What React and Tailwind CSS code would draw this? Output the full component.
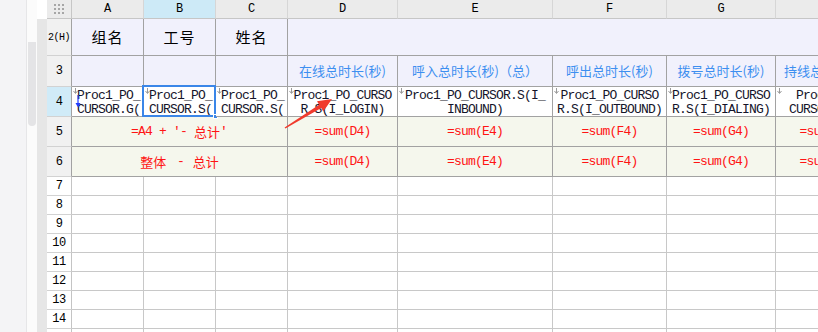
import React from "react";

const MONO = { fontFamily: '"Liberation Mono", "Noto Sans CJK SC", monospace' };
const CJK = { fontFamily: '"Noto Sans CJK SC", "Liberation Sans", sans-serif' };

const DARK = "border-[#a2a2a2]";
const LIGHT = "border-[#c8c8c8]";

function Marker() {
  return (
    <svg className="absolute left-[1px] top-[1px]" width="5" height="6" viewBox="0 0 5 6">
      <path d="M2.5 0 V5" stroke="#9a9a9a" strokeWidth="1" />
      <path d="M0.5 3 L2.5 5.5 L4.5 3" fill="none" stroke="#9a9a9a" strokeWidth="1" />
    </svg>
  );
}

function Row4Cell({ l1, l2, align = "center", children }) {
  return (
    <div className={`relative border-r border-b ${DARK} bg-white overflow-visible`}>
      <div
        className={`h-full overflow-hidden pt-[2px] text-[13px] tracking-[-0.8px] leading-[14px] text-[#14142a] whitespace-pre ${
          align === "left" ? "text-left pl-[5px]" : "text-center"
        }`}
        style={MONO}
      >
        <div>{l1}</div>
        <div>{l2}</div>
      </div>
      <Marker />
      {children}
    </div>
  );
}

function Label({ text }) {
  return (
    <div
      className={`border-r border-b ${DARK} bg-[#f1f1fc] flex items-center justify-center text-[13px] text-[#3d8ff0] whitespace-nowrap overflow-hidden`}
      style={CJK}
    >
      {text}
    </div>
  );
}

function SumCell({ text }) {
  return (
    <div
      className={`border-r border-b ${DARK} bg-[#f5f7ed] flex items-center justify-center text-[13px] tracking-[-0.8px] text-[#ff1414] whitespace-nowrap overflow-hidden`}
      style={MONO}
    >
      {text}
    </div>
  );
}

function RowHead({ children, bg = "bg-[#f1f1f1]", dark = true }) {
  return (
    <div
      className={`border-r border-b ${dark ? "border-r-[#a2a2a2]" : "border-r-[#c4c4c4]"} border-b-[#d2d2d2] ${bg} flex items-center justify-center text-[12px] tracking-[-0.5px] text-black`}
      style={MONO}
    >
      {children}
    </div>
  );
}

export default function App() {
  const cols = ["A", "B", "C", "D", "E", "F", "G", "H"];
  const plainRows = [7, 8, 9, 10, 11, 12, 13, 14, 15];

  return (
    <div className="w-[818px] h-[332px] overflow-hidden flex bg-white">
      {/* left panel */}
      <div className="w-[27px] shrink-0 bg-[#f4f4f6] border-r border-[#e6e6e8]" />
      {/* scrollbar track */}
      <div className="w-[10px] shrink-0 bg-[#fbfbfb] flex flex-col">
        <div className="h-[42px]" />
        <div className="mx-[1px] h-[84px] rounded-b-[4px] bg-[#e4e4e6]" />
      </div>
      {/* gutter */}
      <div className="w-[10px] shrink-0 flex flex-col">
        <div className="h-[19px] bg-white" />
        <div className="flex-1 bg-[#e6e6e6]" />
      </div>

      {/* sheet */}
      <div className="relative shrink-0 grid grid-cols-[25px_72px_72px_72px_110px_155px_114px_109px_104px] grid-rows-[19px_37px_31px_30px_30px_30px_repeat(9,19px)]">
        {/* header row */}
        <div className="border-r border-b border-[#c6c6c6] bg-[#ebebeb] flex items-center justify-center">
          <svg width="12" height="10" viewBox="0 0 12 10">
            {[0, 4, 8].map((x) =>
              [0, 4, 8].map((y) => (
                <rect key={`${x}-${y}`} x={x + 1} y={y} width="2" height="2" fill="#a6a6a6" />
              ))
            )}
          </svg>
        </div>
        {cols.map((c) => (
          <div
            key={c}
            className={`border-r border-b border-r-[#d6d6d6] border-b-[#c6c6c6] ${
              c === "B" ? "bg-[#cdeaf7]" : "bg-[#ebebeb]"
            } flex items-center justify-center text-[12px] text-black`}
            style={MONO}
          >
            {c}
          </div>
        ))}

        {/* row 2 */}
        <RowHead>
          <span className="text-[10px] tracking-[-0.5px]">2(H)</span>
        </RowHead>
        {["组名", "工号", "姓名"].map((t) => (
          <div
            key={t}
            className={`border-r border-b ${DARK} bg-[#f1f1fc] flex items-center justify-center text-[15px] tracking-[1px] text-black`}
            style={CJK}
          >
            {t}
          </div>
        ))}
        <div className={`col-span-5 border-b ${DARK} bg-[#f1f1fc]`} />

        {/* row 3 */}
        <RowHead>3</RowHead>
        <div className={`border-r border-b ${DARK} bg-[#f1f1fc]`} />
        <div className={`border-r border-b ${DARK} bg-[#f1f1fc]`} />
        <div className={`border-r border-b ${DARK} bg-[#f1f1fc]`} />
        <Label text="在线总时长(秒)" />
        <Label text="呼入总时长(秒)（总）" />
        <Label text="呼出总时长(秒)" />
        <Label text="拨号总时长(秒)" />
        <Label text="持线总时长(秒)" />

        {/* row 4 */}
        <RowHead bg="bg-[#d0ebf8]">4</RowHead>
        <Row4Cell l1="Proc1_PO_" l2="CURSOR.G(" align="left">
          <svg className="absolute left-[3px] top-[8px]" width="6" height="13" viewBox="0 0 6 13">
            <path d="M3 0 V9" stroke="#1f3cff" strokeWidth="1.2" />
            <path d="M0.5 8 L3 12.5 L5.5 8 Z" fill="#1f3cff" />
          </svg>
        </Row4Cell>
        <Row4Cell l1="Proc1_PO_" l2="CURSOR.S(" align="left">
          <div className="absolute -left-[2px] -top-[2px] -right-[1px] -bottom-[1px] border-2 border-[#3a86e8]" />
          <div className="absolute -right-[3px] -bottom-[3px] w-[5px] h-[5px] bg-[#3a86e8] border border-white" />
        </Row4Cell>
        <Row4Cell l1="Proc1_PO_" l2="CURSOR.S(" align="left" />
        <Row4Cell l1="Proc1_PO_CURSO" l2="R.S(I_LOGIN)" />
        <Row4Cell l1="Proc1_PO_CURSOR.S(I_" l2="INBOUND)" />
        <Row4Cell l1="Proc1_PO_CURSO" l2="R.S(I_OUTBOUND)" />
        <Row4Cell l1="Proc1_PO_CURSO" l2="R.S(I_DIALING)" />
        <Row4Cell l1="Proc1_PO_" l2="CURSOR.S(I_" />

        {/* row 5 */}
        <RowHead>5</RowHead>
        <div
          className={`col-span-3 border-r border-b ${DARK} bg-[#f5f7ed] flex items-center justify-center text-[13px] text-[#ff1414] whitespace-pre`}
          style={CJK}
        >
          <span style={MONO} className="text-[13px] tracking-[-0.8px]">=A4 + '- </span>
          <span>总计</span>
          <span style={MONO} className="text-[13px]">'</span>
        </div>
        <SumCell text="=sum(D4)" />
        <SumCell text="=sum(E4)" />
        <SumCell text="=sum(F4)" />
        <SumCell text="=sum(G4)" />
        <SumCell text="=sum(H4)" />

        {/* row 6 */}
        <RowHead>6</RowHead>
        <div
          className={`col-span-3 border-r border-b ${DARK} bg-[#f5f7ed] flex items-center justify-center text-[13px] text-[#ff1414] whitespace-pre`}
          style={CJK}
        >
          整体 <span style={MONO}> - </span>总计
        </div>
        <SumCell text="=sum(D4)" />
        <SumCell text="=sum(E4)" />
        <SumCell text="=sum(F4)" />
        <SumCell text="=sum(G4)" />
        <SumCell text="=sum(H4)" />

        {/* plain rows */}
        {plainRows.map((r) => (
          <React.Fragment key={r}>
            <RowHead bg="bg-white" dark={false}>
              {r}
            </RowHead>
            {cols.map((c) => (
              <div key={c} className={`border-r border-b ${LIGHT} bg-white`} />
            ))}
          </React.Fragment>
        ))}

        {/* red annotation arrow */}
        <svg
          className="absolute left-0 top-0 pointer-events-none"
          width="818"
          height="332"
          viewBox="0 0 818 332"
        >
          <g transform="translate(-47 0)">
            <polygon
              points="284.6,127.4 285.4,128.6 321.2,108.1 323.3,111.5 332,99 317,101.2 319.1,104.7"
              fill="#f03a2c"
            />
          </g>
        </svg>
      </div>
    </div>
  );
}
